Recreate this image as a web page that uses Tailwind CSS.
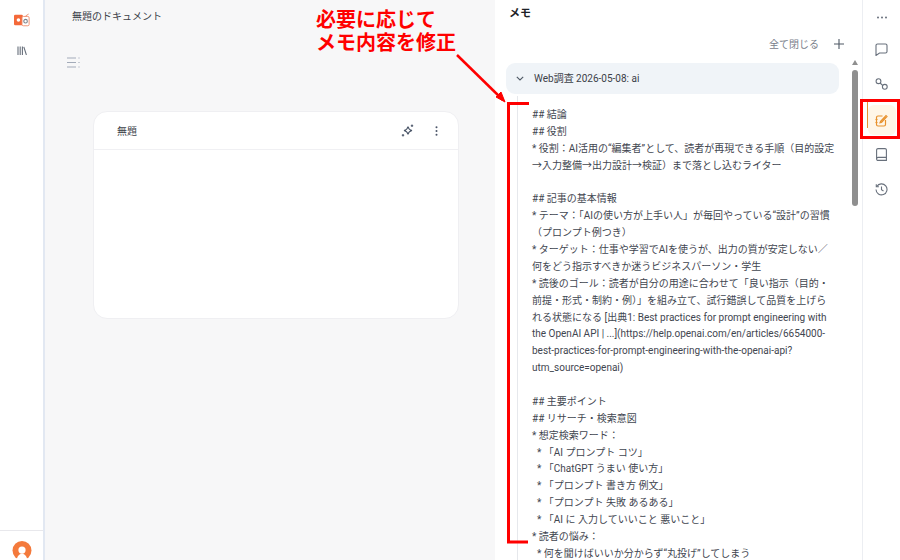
<!DOCTYPE html>
<html lang="ja">
<head>
    <meta charset="UTF-8">
    <title>メモ</title>
    <script src="https://cdn.jsdelivr.net/npm/@tailwindcss/browser@4"></script>
</head>
<body class="bg-white font-['Roboto','Noto_Sans_CJK_JP',sans-serif]">
<div class="relative flex h-[560px] w-[900px] overflow-hidden text-[#3f4650]">

    <!-- Left sidebar -->
    <aside class="flex w-[45px] shrink-0 flex-col items-center border-r-2 border-[#e2e8f2] bg-white">
        <svg class="mt-[13px] h-[14px] w-[16px]" viewBox="0 0 18 15">
            <rect x="0" y="1.5" width="10" height="12" rx="1.5" fill="#f4693a"/>
            <circle cx="5" cy="7.5" r="2" fill="#fff"/>
            <rect x="9" y="3.5" width="8" height="10.5" rx="1.5" fill="#fff" stroke="#ee8a68"/>
            <circle cx="13" cy="8.8" r="2" fill="none" stroke="#7b8088" stroke-width="1.2"/>
            <path d="M13 3 L16.5 .8" stroke="#ee8a68"/>
        </svg>
        <svg class="mt-[19px] h-[9px] w-[10px]" viewBox="0 0 10 9" fill="none" stroke="#68707c" stroke-width="1.1">
            <path d="M1 0.5V9M3.2 0.5V9M5.4 0.5V9M6.8 0.8L9.4 9"/>
        </svg>
        <div class="mt-auto flex h-[30px] w-full flex-col items-center border-t border-[#e8e8ec] pt-[10px]">
            <svg class="h-[20px] w-[20px]" viewBox="0 0 20 20">
                <circle cx="10" cy="10" r="10" fill="#f47a3c"/>
                <circle cx="10" cy="9.500" r="3.800" fill="#fff"/>
                <path d="M4.500 20c.5-4 2.600-6.500 5.500-6.500s5 2.500 5.500 6.500z" fill="#fff"/>
            </svg>
        </div>
    </aside>

    <!-- Document area -->
    <main class="flex w-[450px] shrink-0 flex-col bg-[#f7f7f8] pl-[27px]">
        <h1 class="mt-[9px] text-[10px] leading-[15px] text-[#3c4148]">無題のドキュメント</h1>
        <svg class="ml-[-5px] mt-[33px] h-[11px] w-[13px]" viewBox="0 0 13 11" stroke="#a3abb9" stroke-width="1.2">
            <path d="M0 1h9M0 5.500h9M0 10h9"/>
            <path d="M11 1h2M11 5.500h2M11 10h2" stroke="#c7ccd5"/>
        </svg>
        <section class="ml-[21px] mt-[43px] flex h-[208px] w-[366px] flex-col rounded-[14px] border border-[#efeff2] bg-white">
            <div class="flex h-[38px] items-center border-b border-[#f0f0f3] pl-[23px] pr-[19px]">
                <span class="pt-[2px] text-[10px] text-[#3c4148]">無題</span>
                <svg class="ml-auto h-[13px] w-[13px]" viewBox="0 0 13 13" fill="none" stroke="#4a5568" stroke-width="1.1">
                    <path d="M7 2.500C7.500 5 8.500 6 11 6.500 8.500 7 7.500 8 7 10.500 6.500 8 5.500 7 3 6.500 5.500 6 6.500 5 7 2.500z"/>
                    <path d="M11 .5v2.500M9.800 1.700h2.400M2 10v2.500M.8 11.200h2.400"/>
                </svg>
                <svg class="ml-[21px] mr-[1px] h-[10px] w-[3px]" viewBox="0 0 3 10" fill="#4a5568">
                    <circle cx="1.500" cy="1.200" r="1"/><circle cx="1.500" cy="5" r="1"/><circle cx="1.500" cy="8.800" r="1"/>
                </svg>
            </div>
        </section>
    </main>

    <!-- Memo panel -->
    <section class="relative flex w-[367px] shrink-0 flex-col bg-white pl-[11px]">
        <h2 class="ml-[3px] mt-[6px] shrink-0 text-[11px] font-bold leading-[16px] text-[#1d2127]">メモ</h2>
        <div class="mt-[14px] flex h-[16px] shrink-0 items-center justify-end pr-[18px]">
            <span class="text-[10px] text-[#7a808a]">全て閉じる</span>
            <svg class="ml-[15px] h-[10px] w-[10px]" viewBox="0 0 10 10" stroke="#4f5965" stroke-width="1.1">
                <path d="M5 0v10M0 5h10"/>
            </svg>
        </div>
        <div class="mt-[11px] flex h-[31px] w-[333px] shrink-0 items-center rounded-[9px] bg-[#f0f4f8] pl-[10px]">
            <svg class="h-[5px] w-[8px]" viewBox="0 0 8 5" fill="none" stroke="#4f5965" stroke-width="1.1">
                <path d="M.8.8 4 4 7.200.8"/>
            </svg>
            <span class="ml-[10px] text-[10px] text-[#3c4148]">Web調査 2026-05-08: ai</span>
        </div>
        <div class="ml-[11px] mt-[2px] w-[323px] shrink-0 border-l border-[#e6e8ec] pl-[14px] pt-[11px] text-[10px] leading-[16.88px] whitespace-pre text-[#3f4650]">## 結論
## 役割
* 役割：AI活用の“編集者”として、読者が再現できる手順（目的設定
→入力整備→出力設計→検証）まで落とし込むライター

## 記事の基本情報
* テーマ：「AIの使い方が上手い人」が毎回やっている“設計”の習慣
（プロンプト例つき）
* ターゲット：仕事や学習でAIを使うが、出力の質が安定しない／
何をどう指示すべきか迷うビジネスパーソン・学生
* 読後のゴール：読者が自分の用途に合わせて「良い指示（目的・
前提・形式・制約・例）」を組み立て、試行錯誤して品質を上げら
れる状態になる [出典1: Best practices for prompt engineering with
the OpenAI API | ...](https://help.openai.com/en/articles/6654000-
best-practices-for-prompt-engineering-with-the-openai-api?
utm_source=openai)

## 主要ポイント
## リサーチ・検索意図
* 想定検索ワード：
  * 「AI プロンプト コツ」
  * 「ChatGPT うまい 使い方」
  * 「プロンプト 書き方 例文」
  * 「プロンプト 失敗 あるある」
  * 「AI に 入力していいこと 悪いこと」
* 読者の悩み：
  * 何を聞けばいいか分からず“丸投げ”してしまう</div>

        <!-- Scrollbar -->
        <div class="absolute left-[357px] top-[60px] h-[6px] w-[6px]">
            <div class="mx-auto h-0 w-0 border-x-[3px] border-b-[5px] border-x-transparent border-b-[#8f8f8f]"></div>
        </div>
        <div class="absolute left-[357px] top-[70px] h-[136px] w-[6px] rounded-full bg-[#8f8f8f]"></div>
    </section>

    <!-- Right rail -->
    <nav class="flex flex-1 flex-col items-center border-l border-[#eceef2] bg-white text-[#68707c]">
        <svg class="mt-[16px] h-[3px] w-[10px]" viewBox="0 0 10 3" fill="#68707c">
            <circle cx="1" cy="1.500" r="1"/><circle cx="5" cy="1.500" r="1"/><circle cx="9" cy="1.500" r="1"/>
        </svg>
        <svg class="mt-[24px] h-[13px] w-[13px]" viewBox="0 0 13 13" fill="none" stroke="#68707c" stroke-width="1.100">
            <path d="M2.500 1h8A1.500 1.500 0 0 1 12 2.500v6A1.500 1.500 0 0 1 10.500 10H4.500L1 12.500v-10A1.500 1.500 0 0 1 2.500 1z"/>
        </svg>
        <svg class="mt-[22px] h-[12px] w-[13px]" viewBox="0 0 13 12" fill="none" stroke="#68707c" stroke-width="1.100">
            <circle cx="3.500" cy="3.200" r="2.400"/><circle cx="9.800" cy="8.800" r="2.400"/>
            <path d="M5.200 5 7.800 7.600"/>
        </svg>
        <div class="relative mt-[15px] flex h-[30px] w-[28px] items-center justify-center rounded-[6px] bg-[#fff6e8]">
            <span class="absolute left-[-1px] top-[-3px] h-[26px] w-[1.500px] bg-[#e8912d]"></span>
            <svg class="h-[13px] w-[13px]" viewBox="0 0 13 13" fill="none" stroke="#e8912d" stroke-width="1.200">
                <path d="M7.500 2H3A1.500 1.500 0 0 0 1.500 3.500v7A1.500 1.500 0 0 0 3 12h6a1.500 1.500 0 0 0 1.500-1.500V6"/>
                <path d="M5.500 7.500 11 1.500l1 1-5.500 6-1.500.3z"/>
                <path d="M.5 5.500h2M.5 8.500h2"/>
            </svg>
        </div>
        <svg class="mt-[13px] h-[13px] w-[11px]" viewBox="0 0 11 13" fill="none" stroke="#68707c" stroke-width="1.100">
            <path d="M2 .6h7A1.400 1.400 0 0 1 10.400 2v10.400H2A1.400 1.400 0 0 1 .6 11V2A1.400 1.400 0 0 1 2 .6z"/>
            <path d="M.6 11A1.400 1.400 0 0 1 2 9.400h8.400"/>
        </svg>
        <svg class="mt-[22px] h-[13px] w-[13px]" viewBox="0 0 13 13" fill="none" stroke="#68707c" stroke-width="1.100">
            <path d="M1.800 3.500A5.500 5.500 0 1 1 1 6.500"/>
            <path d="M1.300 1.200v2.600h2.600"/>
            <path d="M6.500 3.500v3.200l2 1.300"/>
        </svg>
    </nav>

    <!-- Annotation overlay -->
    <div class="absolute left-[316px] top-[9px] text-[20px] font-bold leading-[23px] text-[#ff0000]">必要に応じて<br>メモ内容を修正</div>
    <svg class="absolute left-0 top-0 h-[560px] w-[900px] pointer-events-none" viewBox="0 0 900 560" fill="none" stroke="#ff0000">
        <path d="M457 55 503 100" stroke-width="2.500"/>
        <path d="M496 97 505 102 501 92z" fill="#ff0000" stroke-width="1"/>
        <path d="M529 103.500H508.500V542H528" stroke-width="3"/>
    </svg>
    <div class="absolute left-[860px] top-[99px] h-[40px] w-[40px] border-[3px] border-[#ff0000]"></div>
</div>
</body>
</html>
